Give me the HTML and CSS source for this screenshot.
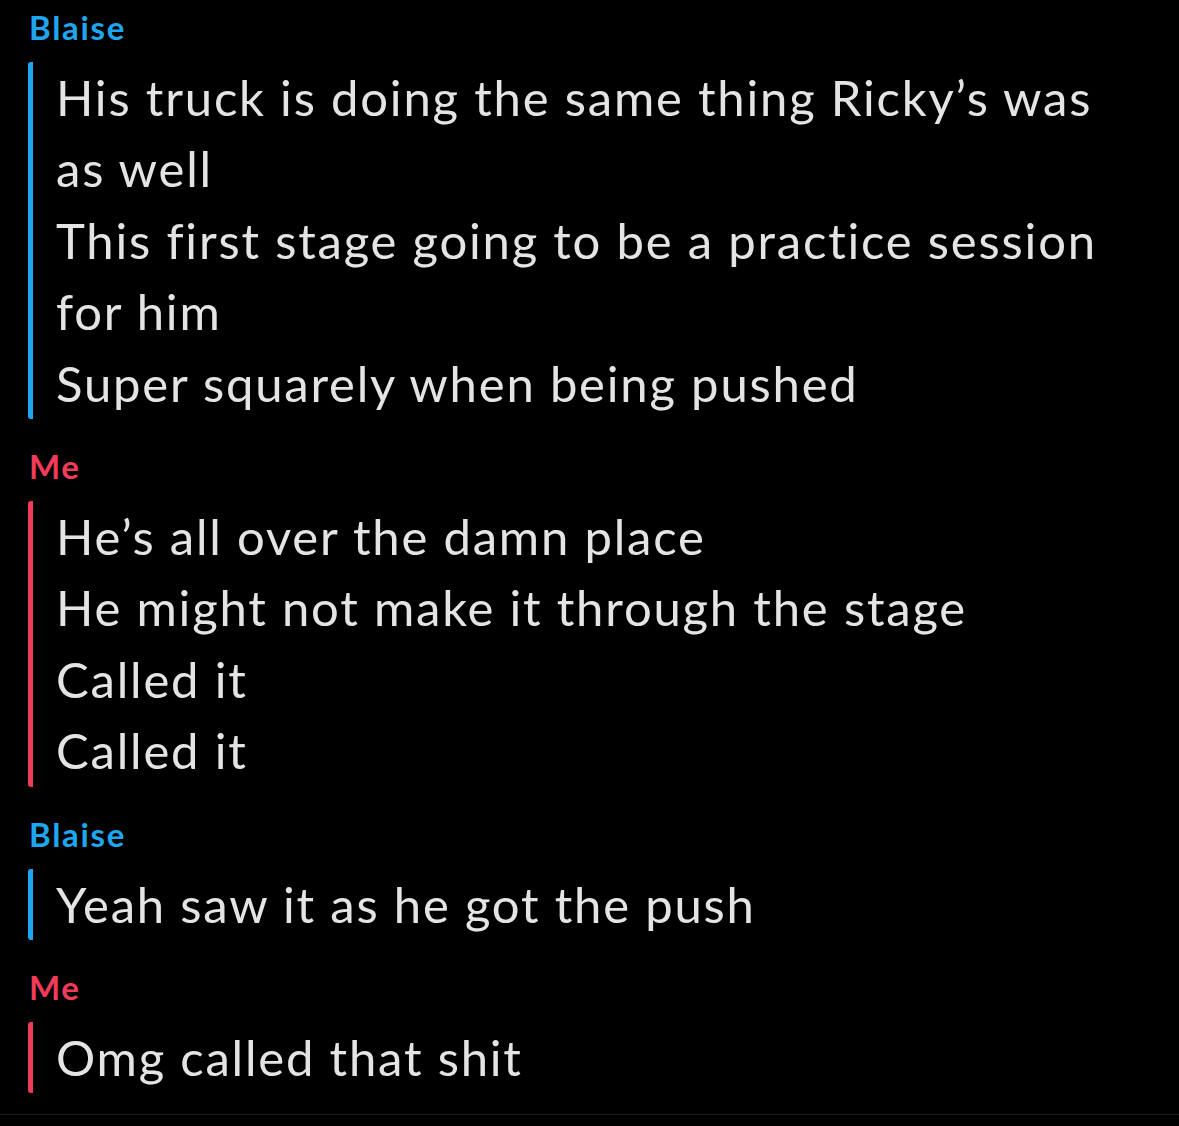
FILE: index.html
```html
<!DOCTYPE html>
<html lang="en">
<head>
<meta charset="utf-8">
<title>Chat</title>
<link rel="stylesheet" href="styles.css">
</head>
<body>
<main class="chat">
  <section class="group them">
    <div class="name">Blaise</div>
    <div class="msgs">
      <div class="line">His truck is doing the same thing Ricky’s was as well</div>
      <div class="line">This first stage going to be a practice session for him</div>
      <div class="line">Super squarely when being pushed</div>
    </div>
  </section>
  <section class="group me">
    <div class="name">Me</div>
    <div class="msgs">
      <div class="line">He’s all over the damn place</div>
      <div class="line">He might not make it through the stage</div>
      <div class="line">Called it</div>
      <div class="line">Called it</div>
    </div>
  </section>
  <section class="group them">
    <div class="name">Blaise</div>
    <div class="msgs">
      <div class="line">Yeah saw it as he got the push</div>
    </div>
  </section>
  <section class="group me">
    <div class="name">Me</div>
    <div class="msgs">
      <div class="line">Omg called that shit</div>
    </div>
  </section>
</main>
<footer class="footer"></footer>
</body>
</html>
```
FILE: styles.css
```css
html, body {
  margin: 0;
  padding: 0;
  background: #000;
}
body {
  min-height: 100vh;
  display: flex;
  flex-direction: column;
  font-family: "Lato", "Noto Sans", sans-serif;
  color: #e4e4e4;
  font-variant-ligatures: none;
}
.chat {
  flex: 1;
  padding: 7px 48px 0 28px;
  display: flex;
  flex-direction: column;
  gap: 27px;
}
.group .name {
  font-size: 33px;
  font-weight: 700;
  line-height: 40px;
  letter-spacing: 1.7px;
  margin: 0 0 15px 1px;
}
.them .name { color: #1ea6ef; }
.me .name { color: #f03c59; }
.msgs {
  border-left: 5px solid;
  border-radius: 3px;
  padding-left: 23px;
}
.them .msgs { border-color: #1ea6ef; }
.me .msgs { border-color: #f03c59; }
.line {
  font-size: 49px;
  line-height: 71.4px;
  letter-spacing: 1.8px;
}
.footer {
  height: 11px;
  border-top: 1px solid #1c1c1c;
}
```
